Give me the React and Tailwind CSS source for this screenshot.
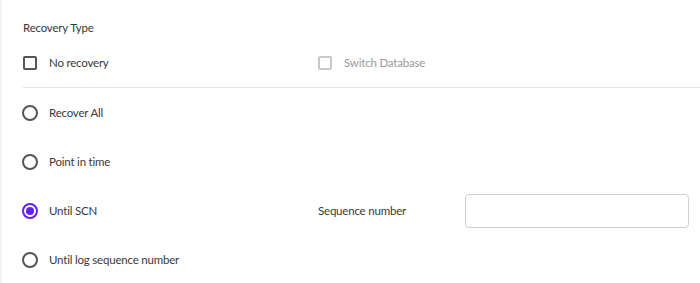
import React, { useState } from 'react';

const Radio = ({ checked, label, onClick }) => (
  <button type="button" onClick={onClick} className="flex items-center gap-[11px] text-left -ml-px">
    <span
      className={
        checked
          ? 'w-4 h-4 rounded-full border-2 border-[#6223f0] flex items-center justify-center'
          : 'w-4 h-4 rounded-full border-2 border-[#555] flex items-center justify-center'
      }
    >
      {checked && <span className="w-2 h-2 rounded-full bg-[#6223f0]" />}
    </span>
    <span className="text-[11.5px] tracking-[-0.2px] text-[#393939]">{label}</span>
  </button>
);

const Checkbox = ({ label, disabled }) => (
  <div className="flex items-center gap-[12px]">
    <span
      className={
        disabled
          ? 'w-[14px] h-[14px] rounded-[2px] border-2 border-[#c8c8c8]'
          : 'w-[14px] h-[14px] rounded-[2px] border-2 border-[#555]'
      }
    />
    <span
      className={
        disabled
          ? 'text-[11.5px] tracking-[-0.2px] text-[#9a9a9a]'
          : 'text-[11.5px] tracking-[-0.2px] text-[#393939]'
      }
    >
      {label}
    </span>
  </div>
);

const options = ['Recover All', 'Point in time', 'Until SCN', 'Until log sequence number'];

export default function App() {
  const [selected, setSelected] = useState('Until SCN');

  return (
    <div
      className="w-[700px] h-[283px] bg-white border-l-2 border-[#f3f3f3] pl-[21px] pt-5 overflow-hidden"
      style={{ fontFamily: '"Lato", "Liberation Sans", sans-serif' }}
    >
      <div className="h-4 flex items-center text-[11.5px] tracking-[-0.2px] text-[#393939]">Recovery Type</div>

      {/* Checkboxes */}
      <div className="mt-[17px] h-5 flex items-center">
        <div className="w-[295px]">
          <Checkbox label="No recovery" />
        </div>
        <Checkbox label="Switch Database" disabled />
      </div>

      <div className="mt-[14px] h-px bg-[#e4e4e4]" />

      {/* Radio options */}
      {options.map((opt) => (
        <div key={opt} className="h-[49px] flex items-center">
          <div className="w-[295px]">
            <Radio checked={selected === opt} label={opt} onClick={() => setSelected(opt)} />
          </div>
          {opt === 'Until SCN' && (
            <div className="flex items-center">
              <span className="w-[147px] text-[11.5px] tracking-[-0.2px] text-[#393939]">Sequence number</span>
              <input className="w-[224px] h-[34px] rounded border border-[#cfcfcf] px-2 text-[12px] outline-none" />
            </div>
          )}
        </div>
      ))}
    </div>
  );
}
